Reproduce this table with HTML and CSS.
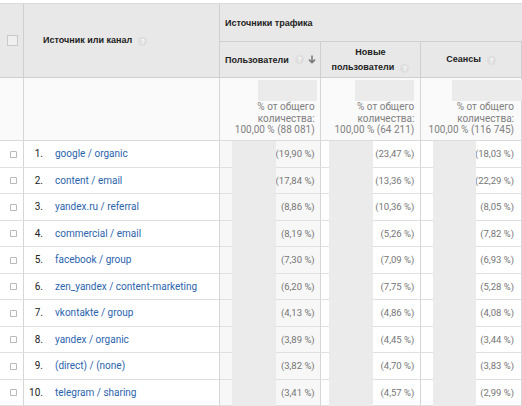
FILE: index.html
```html
<!DOCTYPE html>
<html lang="ru">
<head>
<meta charset="utf-8">
<title>Источники трафика</title>
<link rel="stylesheet" href="styles.css">
</head>
<body>
<div class="report">
<table class="grid">
  <thead>
    <tr>
      <th rowspan="2" class="c-check"><span class="hbox"></span></th>
      <th rowspan="2" class="c-src"><span class="hlabel">Источник или канал</span><span class="help">?</span></th>
      <th colspan="3" class="c-group">Источники трафика</th>
    </tr>
    <tr>
      <th class="c-m c-users"><div class="mh"><span>Пользователи</span><span class="help">?</span><svg class="sort" viewBox="0 0 8 9" width="8" height="9"><path d="M4 0.5V7.5M1 4.6L4 7.6L7 4.6" fill="none" stroke="#7a7a7a" stroke-width="1.6"/></svg></div></th>
      <th class="c-m c-new">Новые<br>пользователи<span class="help">?</span></th>
      <th class="c-m c-sess">Сеансы<span class="help">?</span></th>
    </tr>
  </thead>
  <tbody>
    <tr class="total">
      <td class="c-check"></td>
      <td class="c-src"></td>
      <td class="c-m c-users"><div class="hidden-num"></div><div class="tot">% от общего<br>количества:<br>100,00 % (88 081)</div></td>
      <td class="c-m c-new"><div class="hidden-num"></div><div class="tot">% от общего<br>количества:<br>100,00 % (64 211)</div></td>
      <td class="c-m c-sess"><div class="hidden-num wide"></div><div class="tot">% от общего<br>количества:<br>100,00 % (116 745)</div></td>
    </tr>
    <tr><td class="c-check"><span class="cb"></span></td><td class="c-src"><div class="src"><span class="n">1.</span><a href="#">google / organic</a></div></td><td class="c-m c-users"><span class="pct">(19,90 %)</span></td><td class="c-m c-new"><span class="pct">(23,47 %)</span></td><td class="c-m c-sess"><span class="pct">(18,03 %)</span></td></tr>
    <tr><td class="c-check"><span class="cb"></span></td><td class="c-src"><div class="src"><span class="n">2.</span><a href="#">content / email</a></div></td><td class="c-m c-users"><span class="pct">(17,84 %)</span></td><td class="c-m c-new"><span class="pct">(13,36 %)</span></td><td class="c-m c-sess"><span class="pct">(22,29 %)</span></td></tr>
    <tr><td class="c-check"><span class="cb"></span></td><td class="c-src"><div class="src"><span class="n">3.</span><a href="#">yandex.ru / referral</a></div></td><td class="c-m c-users"><span class="pct">(8,86 %)</span></td><td class="c-m c-new"><span class="pct">(10,36 %)</span></td><td class="c-m c-sess"><span class="pct">(8,05 %)</span></td></tr>
    <tr><td class="c-check"><span class="cb"></span></td><td class="c-src"><div class="src"><span class="n">4.</span><a href="#">commercial / email</a></div></td><td class="c-m c-users"><span class="pct">(8,19 %)</span></td><td class="c-m c-new"><span class="pct">(5,26 %)</span></td><td class="c-m c-sess"><span class="pct">(7,82 %)</span></td></tr>
    <tr><td class="c-check"><span class="cb"></span></td><td class="c-src"><div class="src"><span class="n">5.</span><a href="#">facebook / group</a></div></td><td class="c-m c-users"><span class="pct">(7,30 %)</span></td><td class="c-m c-new"><span class="pct">(7,09 %)</span></td><td class="c-m c-sess"><span class="pct">(6,93 %)</span></td></tr>
    <tr><td class="c-check"><span class="cb"></span></td><td class="c-src"><div class="src"><span class="n">6.</span><a href="#">zen_yandex / content-marketing</a></div></td><td class="c-m c-users"><span class="pct">(6,20 %)</span></td><td class="c-m c-new"><span class="pct">(7,75 %)</span></td><td class="c-m c-sess"><span class="pct">(5,28 %)</span></td></tr>
    <tr><td class="c-check"><span class="cb"></span></td><td class="c-src"><div class="src"><span class="n">7.</span><a href="#">vkontakte / group</a></div></td><td class="c-m c-users"><span class="pct">(4,13 %)</span></td><td class="c-m c-new"><span class="pct">(4,86 %)</span></td><td class="c-m c-sess"><span class="pct">(4,08 %)</span></td></tr>
    <tr><td class="c-check"><span class="cb"></span></td><td class="c-src"><div class="src"><span class="n">8.</span><a href="#">yandex / organic</a></div></td><td class="c-m c-users"><span class="pct">(3,89 %)</span></td><td class="c-m c-new"><span class="pct">(4,45 %)</span></td><td class="c-m c-sess"><span class="pct">(3,44 %)</span></td></tr>
    <tr><td class="c-check"><span class="cb"></span></td><td class="c-src"><div class="src"><span class="n">9.</span><a href="#">(direct) / (none)</a></div></td><td class="c-m c-users"><span class="pct">(3,82 %)</span></td><td class="c-m c-new"><span class="pct">(4,70 %)</span></td><td class="c-m c-sess"><span class="pct">(3,83 %)</span></td></tr>
    <tr><td class="c-check"><span class="cb"></span></td><td class="c-src"><div class="src"><span class="n">10.</span><a href="#">telegram / sharing</a></div></td><td class="c-m c-users"><span class="pct">(3,41 %)</span></td><td class="c-m c-new"><span class="pct">(4,57 %)</span></td><td class="c-m c-sess"><span class="pct">(2,99 %)</span></td></tr>
  </tbody>
</table>
<div class="mask mask-users"></div>
<div class="mask mask-new"></div>
<div class="mask mask-sess"></div>
</div>
</body>
</html>
```
FILE: styles.css
```css
* { box-sizing: border-box; }
html, body { margin: 0; padding: 0; background: #fff; }
body { overflow: hidden; }

.report {
  position: relative;
  padding-top: 3px;
  width: 522px;
}

.grid {
  width: 522px;
  table-layout: fixed;
  border-collapse: separate;
  border-spacing: 0;
  border-top: 1px solid #dcdcdc;
  font-family: Roboto, "Liberation Sans", sans-serif;
  font-size: 10px;
  color: #222;
}

.grid th, .grid td {
  padding: 0;
  border-bottom: 1px solid #e0e0e0;
  vertical-align: middle;
}

.grid thead th {
  background: #e8e8e8;
  border-bottom-color: #cfcfcf;
  font-family: "Liberation Sans", Arial, sans-serif;
  font-weight: bold;
  font-size: 9px;
  color: #222;
  text-align: left;
}

.c-check { width: 24px; border-right: 1px solid #d6d6d6; }
.c-src { width: 196px; border-right: 1px solid #d6d6d6; }
.c-users { width: 99px; border-right: 1px solid #d6d6d6; }
.c-new { width: 100px; border-right: 1px solid #d6d6d6; }
.c-sess { width: 103px; border-right: 1px solid #d6d6d6; }

.grid thead .c-check, .grid thead .c-src, .grid thead .c-m { border-right-color: #cfcfcf; }

thead tr:first-child th { height: 38px; }
thead tr:nth-child(2) th { height: 36px; }

th.c-check { padding-left: 7px; }
.hbox {
  display: block;
  width: 11px;
  height: 11px;
  border: 1px solid #c9c9c9;
  background: #efefef;
}

th.c-src { padding-left: 19px; }
th.c-group { padding-left: 5px; }

.help {
  display: inline-block;
  width: 9px;
  height: 9px;
  margin-left: 6px;
  border-radius: 50%;
  background: #dedede;
  color: #fff;
  font-family: "Liberation Sans", Arial, sans-serif;
  font-size: 7px;
  line-height: 9px;
  text-align: center;
  vertical-align: -1px;
}

.mh {
  display: flex;
  align-items: center;
  padding: 0 4px 0 5px;
}
.mh .sort { margin-left: auto; }

.grid thead th.c-new, .grid thead th.c-sess {
  text-align: center;
  line-height: 15px;
}

/* totals row */
.total td {
  height: 63px;
  background: #fafafa;
  border-bottom-color: #dcdcdc;
  vertical-align: top;
}
.total td.c-m { padding: 2px 5px 0 0; }
.total td.c-new { padding-right: 6px; }
.total td.c-sess { padding-right: 7px; }
.hidden-num {
  width: 59px;
  height: 21px;
  margin-left: auto;
  margin-right: -2px;
  background: #ebebeb;
}
.c-new .hidden-num { margin-right: 0; }
.hidden-num.wide { width: 70px; margin-right: -8px; }
.tot {
  text-align: right;
  font-size: 10px;
  line-height: 11.5px;
  color: #808080;
}

/* data rows */
tbody tr:not(.total) td { height: 26.5px; background: #fff; }
tbody tr:not(.total) td.c-users { background: #f7f7f7; }

td.c-check { padding-left: 10px; }
.cb {
  display: block;
  width: 7px;
  height: 7px;
  border: 1px solid #b9b9b9;
  border-radius: 1px 1px 0 0;
  background: #fff;
  margin-top: 1px;
}

.src { display: flex; align-items: center; }
.src .n { width: 19px; text-align: right; color: #222; }
.src a {
  margin-left: 12px;
  color: #2b64ad;
  text-decoration: none;
}

td.c-m { text-align: right; }
td.c-users { padding-right: 5px; }
td.c-new { padding-right: 6px; }
td.c-sess { padding-right: 7px; }
.pct { font-size: 9.5px; color: #757575; }

/* redaction stripes over hidden values */
.mask {
  position: absolute;
  top: 141px;
  bottom: -10px;
  width: 44px;
  background: #ebebeb;
}
.mask-users { left: 232px; }
.mask-new { left: 329px; }
.mask-sess { left: 433px; width: 43px; }
```
